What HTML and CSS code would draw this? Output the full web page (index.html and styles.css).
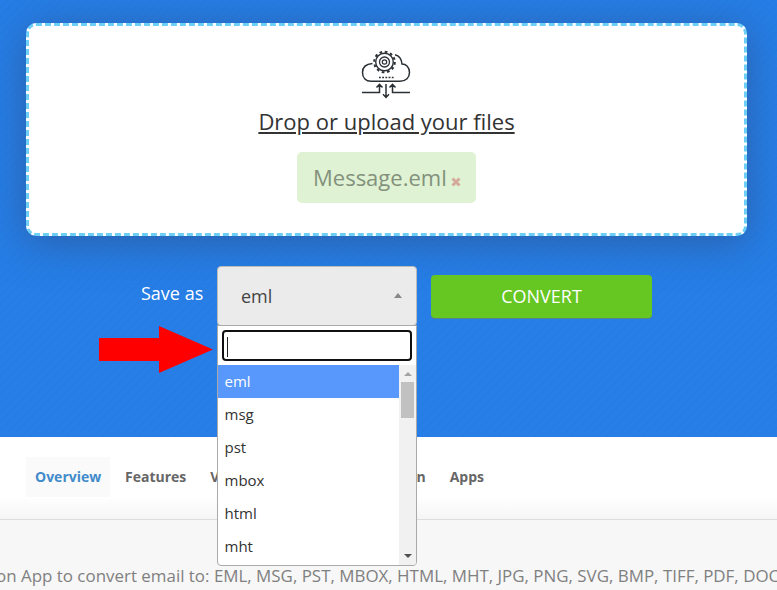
FILE: index.html
```html
<!DOCTYPE html>
<html lang="en">
<head>
<meta charset="utf-8">
<title>Email conversion</title>
<link rel="stylesheet" href="styles.css">
</head>
<body>
<section class="hero">
  <div class="dropzone">
    <svg class="cloud" viewBox="0 0 50 50" width="50" height="50" fill="none" stroke="#2b3034" stroke-width="1.5">
      <path d="M11.500 14.500C5 15 1.500 18.500 1.500 23.500C1.500 29 5 32.200 10 32.200H39C45 32.200 48.500 28.500 48.500 23.500C48.500 18 45 15 41 15C40.500 9.500 38 6.500 34 5.700"/>
      <circle cx="23.500" cy="13" r="8.800" stroke-width="1.400"/>
      <circle cx="23.500" cy="13" r="10.300" stroke-width="2" stroke-dasharray="2.700 2.690"/>
      <circle cx="23.500" cy="13" r="5" stroke-width="1.300"/>
      <circle cx="23.500" cy="13" r="2.200" stroke-width="1.200"/>
      <path d="M18 28.500H33" stroke-dasharray="1.800 1.400"/>
      <path d="M1 43.500H18.500V35.500M15.500 38.500L18.500 35.300L21.500 38.500M49 43.500H31.500V35.500M28.500 38.500L31.500 35.300L34.500 38.500M25 35V48M22 45.300L25 48.500L28 45.300"/>
    </svg>
    <a class="upload">Drop or upload your files</a>
    <div class="file"><span>Message.eml</span><svg class="remove" width="10" height="10" viewBox="0 0 10 10"><path d="M1.500 1.500L8.500 8.500M8.500 1.500L1.500 8.500" stroke="#d5a99a" stroke-width="2.900"/></svg></div>
  </div>
  <div class="controls">
    <span class="label">Save as</span>
    <div class="select">
      <span>eml</span><i class="tri up"></i>
      <div class="menu">
        <div class="search"><i class="caret"></i></div>
        <div class="list">
          <div class="options">
            <div class="option active">eml</div>
            <div class="option">msg</div>
            <div class="option">pst</div>
            <div class="option">mbox</div>
            <div class="option">html</div>
            <div class="option">mht</div>
          </div>
          <div class="scrollbar"><i class="tri light"></i><i class="thumb"></i><i class="tri down"></i></div>
        </div>
      </div>
    </div>
    <button class="convert">CONVERT</button>
  </div>
  <svg class="pointer" width="114" height="48" viewBox="0 0 114 48"><path d="M0 12H60V0L114 23.500L60 47V35H0Z" fill="#f00"/></svg>
</section>
<nav class="tabs">
  <a class="tab current">Overview</a>
  <a class="tab">Features</a>
  <a class="tab">V</a>
  <a class="tab last">n</a>
  <a class="tab">Apps</a>
</nav>
<section class="about"><p>on App to convert email to: EML, MSG, PST, MBOX, HTML, MHT, JPG, PNG, SVG, BMP, TIFF, PDF, DOC</p></section>
</body>
</html>
```

FILE: styles.css
```css
* { box-sizing: border-box; }
body { margin: 0; width: 777px; height: 590px; overflow: hidden; font-family: "Open Sans", sans-serif; background: #f7f7f7; }
.hero {
  position: relative; height: 437px; padding: 23px 30px 0 26px;
  background: repeating-linear-gradient(135deg, #267ee6 0, #267ee6 4.600px, #267be0 5.600px, #267ee6 6.364px);
}
.dropzone {
  height: 213px; border: 3px dashed #6dcff6; border-radius: 10px; background: #fff;
  box-shadow: 0 6px 40px rgba(45, 65, 110, .5);
  display: flex; flex-direction: column; align-items: center; padding-top: 23px;
}
.cloud { flex: none; margin-right: 2px; }
.upload { margin-top: 6px; font-size: 22px; line-height: 32px; color: #333; text-decoration: underline; white-space: nowrap; }
.file {
  display: flex; align-items: center; margin-top: 15px; width: 179px; height: 51px; padding: 0 0 2px 16px;
  border-radius: 5px; background: #dff2d3; color: #83917c; font-size: 22px;
}
.remove { margin: 10px 0 0 4px; }
.controls { display: flex; align-items: flex-start; margin-top: 30px; padding-left: 115px; }
.label { width: 76px; padding-top: 14px; font-size: 18px; line-height: 26px; color: #fff; white-space: nowrap; }
.select {
  position: relative; display: flex; align-items: center; justify-content: space-between;
  width: 200px; height: 60px; padding: 0 14px 0 23px; border: 1px solid #bbb; border-radius: 4px;
  background: #ebebeb; color: #444; font-size: 18px;
}
.tri { width: 0; height: 0; border: 4px solid transparent; border-top: 0; border-bottom: 5px solid #888; }
.up { margin-bottom: 2px; }
.convert {
  width: 221px; height: 43px; margin: 9px 0 0 14px; padding: 0 0 2px; border: 0; border-radius: 4px;
  background: #66c622; box-shadow: 0 1px 0 #56828a; color: #fff; font: 18px "Open Sans", sans-serif;
}
.menu {
  position: absolute; z-index: 2; left: -1px; top: 58px; width: 200px; height: 241px;
  border: 1px solid #aaa; border-radius: 0 0 4px 4px; background: #fff; overflow: hidden;
}
.search { width: 190px; height: 31px; margin: 4px; padding: 5px 3px; border: 2px solid #101010; border-radius: 4px; }
.caret { display: block; width: 1px; height: 20px; background: #222; }
.list { display: flex; height: 200px; }
.options { flex: 1; }
.option { height: 33px; padding-left: 6.500px; font-size: 15px; line-height: 33px; color: #333; }
.option.active { background: #5897fb; color: #fff; }
.scrollbar { display: flex; flex-direction: column; align-items: center; width: 17px; padding: 7px 0; background: #f1f1f1; }
.light { border-bottom: 4px solid #a3a3a3; }
.thumb { width: 13px; height: 36px; margin-top: 6px; background: #c1c1c1; }
.down { margin-top: auto; border-bottom: 0; border-top: 4px solid #505050; }
.pointer { position: absolute; left: 99px; top: 326px; }
.tabs {
  display: flex; height: 83px; padding: 20px 0 0 26px; border-bottom: 1px solid #ddd;
  background: linear-gradient(#fff 0, #fff 60px, #f5f5f5 83px);
}
.tab { height: 40px; padding: 0 9px; margin-right: 6px; font-size: 14px; font-weight: 700; line-height: 40px; color: #666; }
.current { width: 84px; background: #fafafa; color: #428bca; }
.last { margin-left: auto; }
.tab:last-child { margin-right: 284px; }
.about { height: 70px; padding-top: 44px; overflow: hidden; }
.about p { margin: 0 0 0 -4px; font-size: 16.930px; line-height: 24px; color: #808080; white-space: nowrap; }
```
